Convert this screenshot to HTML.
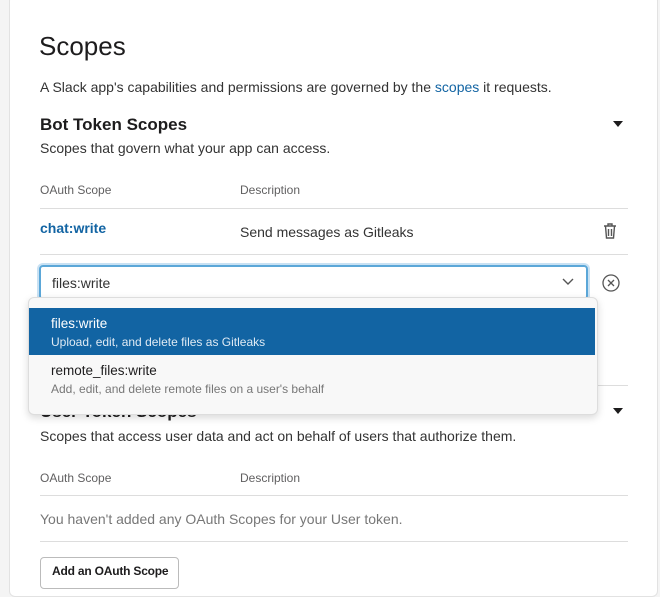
<!DOCTYPE html>
<html><head><style>
body{margin:0;width:660px;height:579px;overflow:hidden;background:#f4f4f4;font-family:"Liberation Sans",sans-serif;color:#1d1c1d;position:relative}
.card{position:absolute;left:9px;top:-5px;width:647px;height:600px;background:#fff;border:1px solid #e2e2e2;border-radius:6px}
.a{position:absolute;white-space:nowrap}
.line{position:absolute;left:40px;width:588px;height:1px;background:#ddd}
.tri{position:absolute;width:0;height:0;border-left:5px solid transparent;border-right:5px solid transparent;border-top:6px solid #1d1c1d}
</style></head><body>
<div class="card"></div>
<div class="a" style="left:39px;top:31px;font-size:26px;">Scopes</div>
<div class="a" style="left:40px;top:79px;font-size:14px;color:#333">A Slack app's capabilities and permissions are governed by the <span style="color:#1264a3">scopes</span> it requests.</div>
<div class="a" style="left:40px;top:115px;font-size:17px;font-weight:bold">Bot Token Scopes</div>
<div class="tri" style="left:613px;top:121px"></div>
<div class="a" style="left:40px;top:140px;font-size:14px;color:#333">Scopes that govern what your app can access.</div>
<div class="a" style="left:40px;top:183px;font-size:12px;color:#616061">OAuth Scope</div>
<div class="a" style="left:240px;top:183px;font-size:12px;color:#616061">Description</div>
<div class="line" style="top:208px"></div>
<div class="a" style="left:40px;top:220px;font-size:14px;font-weight:bold;color:#1264a3">chat:write</div>
<div class="a" style="left:240px;top:224px;font-size:14px;color:#333">Send messages as Gitleaks</div>
<svg class="a" style="left:602px;top:222px" width="16" height="18" viewBox="0 0 16 18" fill="none" stroke="#555" stroke-width="1.4"><path d="M2 4h12M6 4V2h4v2M3.5 4l1 12h7l1-12M6.5 7v7M9.5 7v7"/></svg>
<div class="line" style="top:254px"></div>
<div class="a" style="left:39px;top:265px;width:545px;height:31px;border:2px solid #5ba7d8;border-radius:4px;box-shadow:0 0 0 2px #c8e1f3;box-sizing:content-box;"></div>
<div class="a" style="left:52px;top:275px;font-size:14px;color:#333">files:write</div>
<svg class="a" style="left:562px;top:278px" width="12" height="8" viewBox="0 0 12 8" fill="none" stroke="#555" stroke-width="1.4"><path d="M1 1l5 5 5-5"/></svg>
<svg class="a" style="left:602px;top:274px" width="18" height="18" viewBox="0 0 18 18" fill="none" stroke="#555" stroke-width="1.3"><circle cx="9" cy="9" r="8"/><path d="M6 6l6 6M12 6l-6 6"/></svg>
<div class="line" style="top:385px"></div>
<div class="a" style="left:40px;top:402px;font-size:17px;font-weight:bold">User Token Scopes</div>
<div class="tri" style="left:613px;top:408px"></div>
<div class="a" style="left:28px;top:297px;width:568px;height:116px;background:#f8f8f8;border:1px solid #ddd;border-radius:6px;box-shadow:0 3px 8px rgba(0,0,0,.15)"></div>
<div class="a" style="left:29px;top:308px;width:566px;height:47px;background:#1264a3"></div>
<div class="a" style="left:51px;top:316px;font-size:13.5px;color:#fff">files:write</div>
<div class="a" style="left:51px;top:335px;font-size:12px;color:#dfeaf4">Upload, edit, and delete files as Gitleaks</div>
<div class="a" style="left:51px;top:363px;font-size:13.5px;color:#1d1c1d">remote_files:write</div>
<div class="a" style="left:51px;top:382px;font-size:12px;color:#777">Add, edit, and delete remote files on a user's behalf</div>
<div class="a" style="left:40px;top:428px;font-size:14px;color:#333">Scopes that access user data and act on behalf of users that authorize them.</div>
<div class="a" style="left:40px;top:471px;font-size:12px;color:#616061">OAuth Scope</div>
<div class="a" style="left:240px;top:471px;font-size:12px;color:#616061">Description</div>
<div class="line" style="top:495px"></div>
<div class="a" style="left:40px;top:511px;font-size:14px;color:#777">You haven't added any OAuth Scopes for your User token.</div>
<div class="line" style="top:541px"></div>
<div class="a" style="left:40px;top:557px;width:137px;height:30px;border:1px solid #bbb;border-radius:4px;background:#fff"></div>
<div class="a" style="left:52px;top:564px;font-size:12px;font-weight:bold;letter-spacing:-0.2px">Add an OAuth Scope</div>
</body></html>
